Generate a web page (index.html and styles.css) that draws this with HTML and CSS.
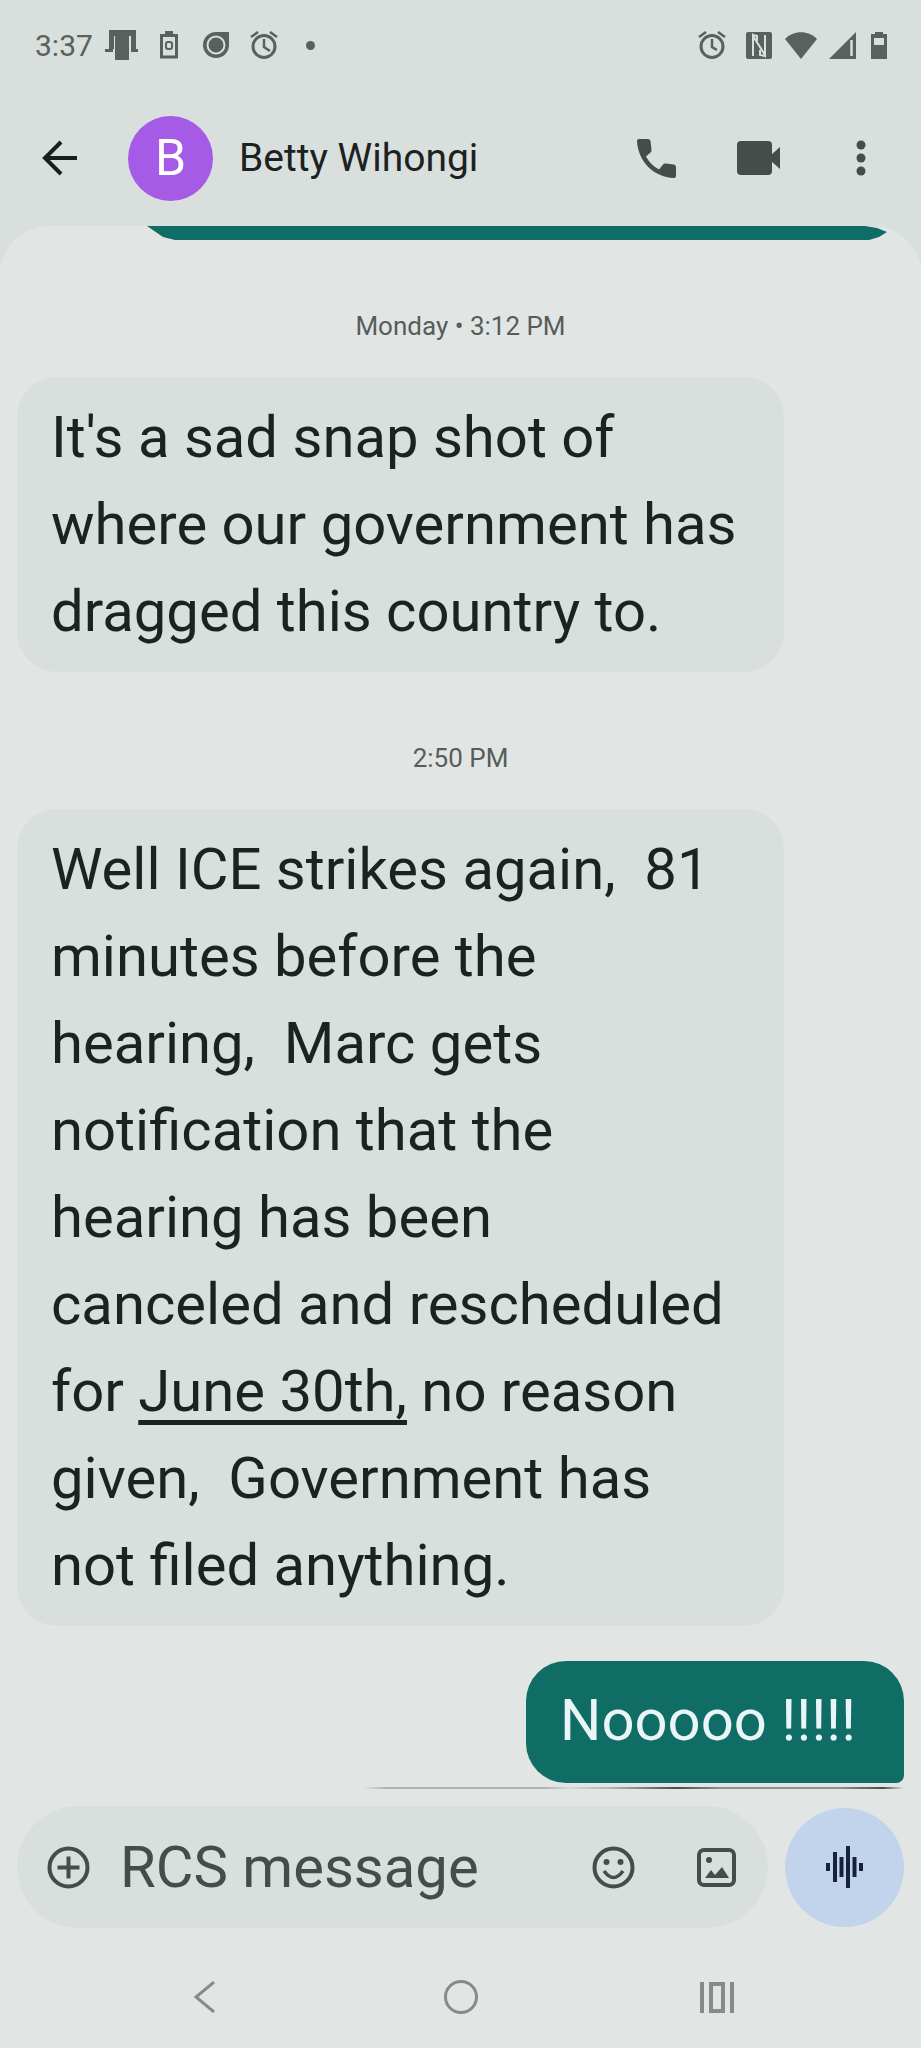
FILE: index.html
```html
<!DOCTYPE html>
<html lang="en">
<head>
    <meta charset="UTF-8">
    <meta name="viewport" content="width=device-width, initial-scale=1.0">
    <title>Betty Wihongi</title>
    <link rel="stylesheet" href="styles.css">
</head>
<body>
    <div class="status-bar">
        <span class="clock">3:37</span>
        <svg class="i-phone" width="34" height="32" viewBox="0 0 34 32"><path d="M4 1h27v19h-5V7H9v13H4zM0 20h8v3H0zM26 20h7v3h-7z"/><path d="M10 7h14v24H10z"/></svg>
        <svg class="i-saver" width="18" height="28" viewBox="0 0 18 28"><path d="M1.500 4.500h15v21.500h-15z" fill="none" stroke="currentColor" stroke-width="3"/><path d="M5 0h8v4H5z"/><rect x="6" y="11" width="6" height="7" rx="2" fill="none" stroke="currentColor" stroke-width="2"/></svg>
        <svg class="i-record" width="28" height="28" viewBox="0 0 28 28"><path d="M14 1h13v13A13 13 0 1 1 14 1z"/><circle cx="14" cy="14" r="8.500" fill="none" stroke="#d9dfdd" stroke-width="2"/></svg>
        <svg class="i-alarm" width="28" height="28" viewBox="0 0 28 28" fill="none" stroke="currentColor" stroke-width="3"><circle cx="14" cy="15.500" r="11"/><path d="M14 8v8l6 4M1 6l7-5M20 1l7 5" stroke-width="2.500"/></svg>
        <span class="dot"></span>
        <span class="spacer"></span>
        <svg class="i-alarm-right" width="28" height="28" viewBox="0 0 28 28" fill="none" stroke="currentColor" stroke-width="3"><circle cx="14" cy="15.500" r="11"/><path d="M14 8v8l5 3M1 6l7-5M20 1l7 5" stroke-width="2.500"/></svg>
        <svg class="i-nfc" width="26" height="27" viewBox="0 0 26 27"><rect width="26" height="27" rx="2"/><path d="M7 24V4l12 19V3M7 3l4 1v5M19 24l-5-1v-5" fill="none" stroke="#d9dfdd" stroke-width="2"/></svg>
        <svg class="i-wifi" width="32" height="27" viewBox="0 0 32 27"><path d="M0 7C8-2 24-2 32 7L16 27z"/></svg>
        <svg class="i-signal" width="27" height="27" viewBox="0 0 27 27"><path d="M0 27L27 0v27z"/><path d="M22.500 8v16" stroke="#d9dfdd" stroke-width="2.500"/></svg>
        <svg class="i-battery" width="16" height="27" viewBox="0 0 16 27"><path d="M4 0h8v2h4v25H0V2h4z"/><path d="M3 6h10v7H3z" fill="#d9dfdd"/></svg>
    </div>

    <header class="chat-header">
        <button class="icon-btn back" aria-label="Back">
            <svg width="36" height="36" viewBox="0 0 36 36" fill="none" stroke="#191f1e" stroke-width="4"><path d="M35 18H3M19 2L3 18l16 16"/></svg>
        </button>
        <div class="avatar">B</div>
        <h1>Betty Wihongi</h1>
        <button class="icon-btn call" aria-label="Call">
            <svg width="39" height="39" viewBox="0 0 39 39"><path d="M2 0h9q2 0 2.500 2l1 9q.2 1.500-1 2.500L9 17.500Q13.500 26 22 30.500l4-5q1-1.200 2.500-1l8.500 1q2 .5 2 2.500v9q0 2-2 2C16 38 1 22 0 2q0-2 2-2z"/></svg>
        </button>
        <button class="icon-btn video" aria-label="Video call">
            <svg width="44" height="34" viewBox="0 0 44 34"><rect width="35" height="34" rx="4"/><path d="M34 14l9-8v22l-9-8z"/></svg>
        </button>
        <button class="icon-btn more" aria-label="More options">
            <svg width="10" height="36" viewBox="0 0 10 36"><circle cx="5" cy="5" r="4.500"/><circle cx="5" cy="18" r="4.500"/><circle cx="5" cy="31" r="4.500"/></svg>
        </button>
    </header>

    <main class="thread">
        <div class="sent-tail"></div>
        <time class="stamp">Monday • 3:12 PM</time>
        <p class="bubble received">It's a sad snap shot of where our government has dragged this country to.</p>
        <time class="stamp">2:50 PM</time>
        <p class="bubble received">Well ICE strikes again,  81 minutes before the hearing,  Marc gets notification that the hearing has been<br>canceled and rescheduled for <a href="#june-30">June 30th,</a> no reason given,  Government has not filed anything.</p>
        <p class="bubble sent">Nooooo !!!!!</p>
        <div class="next-edge"></div>
    </main>

    <form class="composer">
        <div class="field">
            <button type="button" class="icon-btn" aria-label="Attach">
                <svg width="43" height="43" viewBox="0 0 43 43" fill="none" stroke="currentColor" stroke-width="4"><circle cx="21.500" cy="21.500" r="19"/><path d="M21.500 10.500v22M10.500 21.500h22"/></svg>
            </button>
            <input type="text" placeholder="RCS message" aria-label="RCS message">
            <button type="button" class="icon-btn" aria-label="Emoji">
                <svg width="43" height="43" viewBox="0 0 43 43"><circle cx="21.500" cy="21.500" r="19" fill="none" stroke="currentColor" stroke-width="4"/><circle cx="14.500" cy="16" r="3"/><circle cx="28.500" cy="16" r="3"/><path d="M12 25q9.500 13 19 0" fill="none" stroke="currentColor" stroke-width="3.500"/></svg>
            </button>
            <button type="button" class="icon-btn gallery" aria-label="Gallery">
                <svg width="39" height="39" viewBox="0 0 39 39"><rect x="2" y="2" width="35" height="35" rx="5" fill="none" stroke="currentColor" stroke-width="4"/><circle cx="12" cy="12" r="3"/><path d="M8 30l6-8 4 5 7-8 7 11z"/></svg>
            </button>
        </div>
        <button type="button" class="voice" aria-label="Record voice message">
            <svg width="38" height="42" viewBox="0 0 38 42" fill="none" stroke="#16233f" stroke-width="4"><path d="M2 17v8M9 6v30M15.500 11v20M22 0v42M28.500 11v20M35 17v8"/></svg>
        </button>
    </form>

    <nav class="system-nav">
        <button class="icon-btn" aria-label="Back">
            <svg width="22" height="32" viewBox="0 0 22 32" fill="none" stroke="currentColor" stroke-width="3"><path d="M20 1L2 16l18 15"/></svg>
        </button>
        <button class="icon-btn" aria-label="Home">
            <svg width="34" height="34" viewBox="0 0 34 34" fill="none" stroke="currentColor" stroke-width="3"><circle cx="17" cy="17" r="15.500"/></svg>
        </button>
        <button class="icon-btn" aria-label="Recent apps">
            <svg width="36" height="31" viewBox="0 0 36 31" fill="none" stroke="currentColor" stroke-width="4"><path d="M3 0v31M33 0v31M12 2h12v27h-12z"/></svg>
        </button>
    </nav>
</body>
</html>
```

FILE: styles.css
```css
:root {
    --bar: #d9dfdd;
    --surface: #e1e6e4;
    --sent: #106d65;
    --text: #1b2221;
    --icon: #454c4a;
}

* {
    margin: 0;
    padding: 0;
    box-sizing: border-box;
    font-family: Roboto, "Liberation Sans", sans-serif;
}

body {
    min-height: 100vh;
    display: flex;
    flex-direction: column;
    background: var(--surface);
    color: var(--text);
}

svg {
    display: block;
    flex: none;
    fill: currentColor;
}

svg[fill="none"] {
    fill: none;
}

.icon-btn {
    background: none;
    border: none;
    color: inherit;
    flex: none;
}

/* status bar */
.status-bar {
    display: flex;
    align-items: center;
    height: 90px;
    padding: 0 34px 0 35px;
    background: var(--bar);
    color: #5a605e;
}

.clock {
    font-size: 30px;
    margin-right: 12px;
}

.i-saver {
    margin-left: 21px;
}

.i-record {
    margin-left: 24px;
}

.i-alarm {
    margin-left: 20px;
}

.dot {
    width: 9px;
    height: 9px;
    border-radius: 50%;
    background: #5a605e;
    margin-left: 28px;
}

.spacer {
    flex: 1;
}

.i-nfc {
    margin-left: 20px;
}

.i-wifi {
    margin-left: 13px;
}

.i-signal {
    margin-left: 12px;
}

.i-battery {
    margin-left: 15px;
}

/* header */
.chat-header {
    display: flex;
    align-items: center;
    height: 136px;
    padding: 0 55px 0 42px;
    background: var(--bar);
    color: var(--icon);
}

.avatar {
    width: 85px;
    height: 85px;
    margin-left: 50px;
    border-radius: 50%;
    background: #a65be6;
    color: white;
    font-size: 50px;
    line-height: 85px;
    text-align: center;
}

.chat-header h1 {
    flex: 1;
    margin-left: 26px;
    font-size: 39px;
    font-weight: 400;
    color: var(--text);
}

.video {
    margin-left: 61px;
}

.more {
    margin-left: 75px;
}

/* messages */
.thread {
    flex: 1;
    display: flex;
    flex-direction: column;
    padding: 0 17px;
    background: radial-gradient(circle at 50px 50px, transparent 50px, var(--bar) 51px) top left / 50px 50px no-repeat,
        radial-gradient(circle at 0 50px, transparent 50px, var(--bar) 51px) top right / 50px 50px no-repeat;
}

.sent-tail {
    height: 14px;
    margin: 0 17px 0 130px;
    background: var(--sent);
    clip-path: polygon(0 0, calc(100% - 22px) 0, calc(100% - 10px) 2px, 100% 6px, calc(100% - 8px) 11px, calc(100% - 18px) 100%, 28px 100%, 16px 11px);
}

.stamp {
    align-self: center;
    margin: 70px 0 35px;
    font-size: 26px;
    line-height: 32px;
    color: #565d5b;
}

.bubble {
    font-size: 58px;
    line-height: 87px;
    border-radius: 40px;
    white-space: pre-wrap;
}

.bubble a {
    color: inherit;
    text-decoration-thickness: 5px;
    text-underline-offset: 9px;
    text-decoration-skip-ink: none;
}

.received {
    max-width: 767px;
    padding: 17px 42px 17px 34px;
    background: var(--bar);
}

.sent {
    align-self: flex-end;
    margin-top: 35px;
    padding: 16px 48px 19px 34px;
    background: var(--sent);
    color: #eaf5f7;
    border-bottom-right-radius: 8px;
}

.next-edge {
    width: 61%;
    height: 2px;
    margin-top: 4px;
    align-self: flex-end;
    background: linear-gradient(to right, transparent, #aeb5b3 4%, #aeb5b3 34%, #d6dbd9 38%, #aeb5b3 46%, #454c4a 58%, #8b9390 66%, #8b9390 88%, #454c4a 96%, transparent);
}

/* composer */
.composer {
    display: flex;
    align-items: center;
    gap: 17px;
    padding: 0 17px;
}

.field {
    flex: 1;
    min-width: 0;
    display: flex;
    align-items: center;
    gap: 30px;
    height: 122px;
    padding: 0 32px 0 30px;
    border-radius: 61px;
    background: var(--bar);
    color: var(--icon);
}

.field input {
    flex: 1;
    min-width: 0;
    border: none;
    outline: none;
    background: none;
    font-size: 58px;
    color: var(--text);
}

.field input::placeholder {
    color: var(--icon);
    opacity: 1;
}

.gallery {
    margin-left: 32px;
}

.voice {
    flex: none;
    display: flex;
    align-items: center;
    justify-content: center;
    width: 119px;
    height: 119px;
    border: none;
    border-radius: 50%;
    background: #c2d3ec;
}

/* system navigation */
.system-nav {
    display: grid;
    grid-template-columns: repeat(3, 256px);
    justify-content: center;
    justify-items: center;
    align-items: center;
    height: 120px;
    padding-top: 18px;
    color: #858b89;
}
```
